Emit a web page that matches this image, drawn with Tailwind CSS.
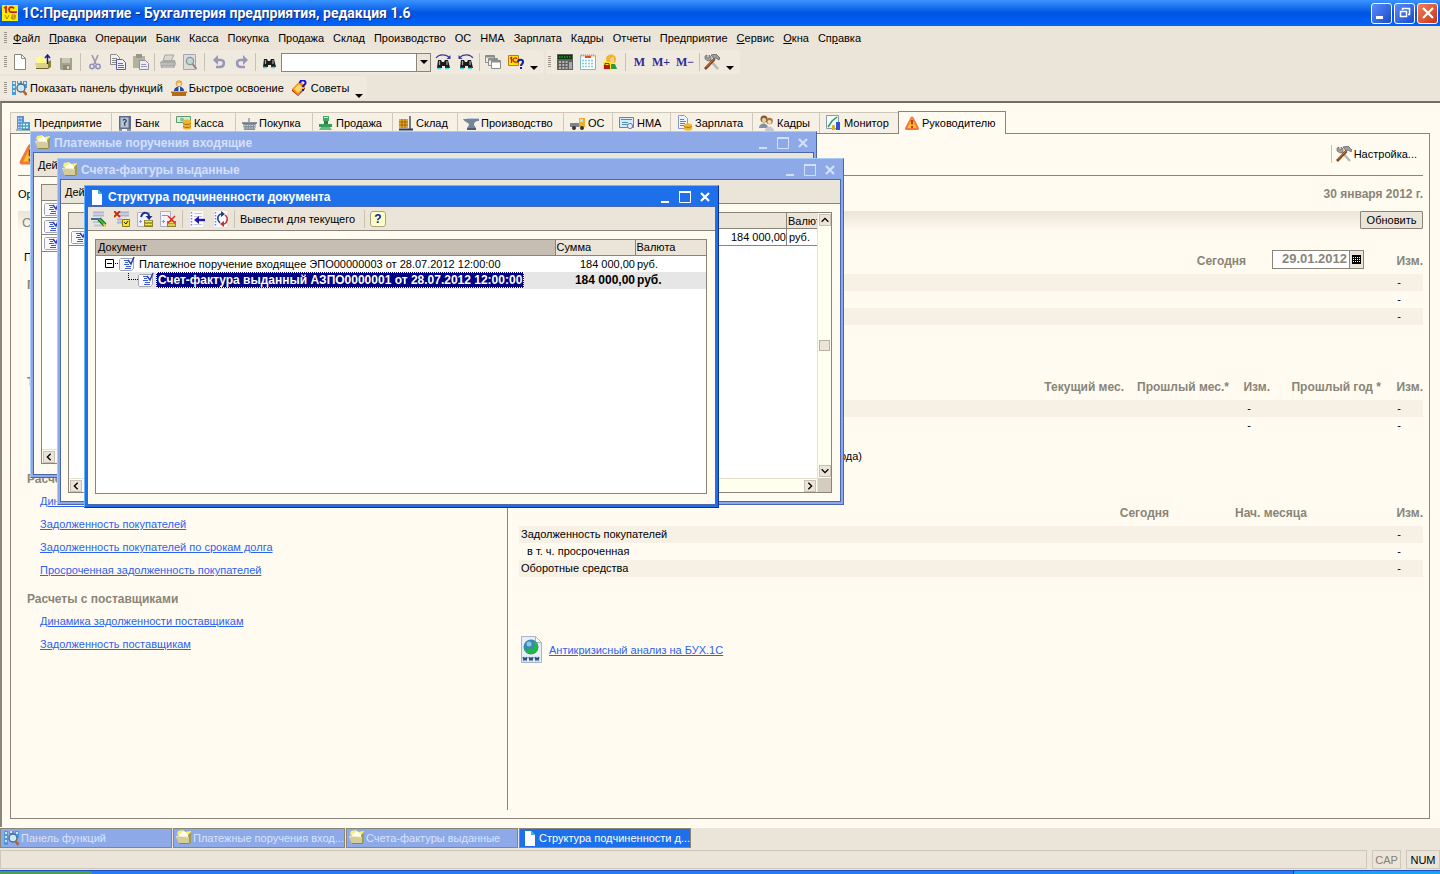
<!DOCTYPE html>
<html lang="ru">
<head>
<meta charset="utf-8">
<title>1С:Предприятие - Бухгалтерия предприятия, редакция 1.6</title>
<script src="https://cdn.jsdelivr.net/npm/@tailwindcss/browser@4"></script>
</head>
<body class="flex h-screen flex-col overflow-hidden bg-[#ebe4d8] font-['Liberation_Sans',Arial,sans-serif] text-[11px] leading-4 text-black">

<svg class="hidden" xmlns="http://www.w3.org/2000/svg">
  <symbol id="doc" viewBox="0 0 16 16"><path d="M2.500 .5h7l4 4v11h-11z" fill="#fff" stroke="#8a867a"/><path d="M9.500 .5v4h4" fill="none" stroke="#8a867a"/></symbol>
  <symbol id="page" viewBox="0 0 16 16"><path d="M3 1h6l4 4v11H3z" fill="#fff"/><path d="M9 1v4h4z" fill="#35b6d8"/></symbol>
  <symbol id="open" viewBox="0 0 16 16"><path d="M1 4l5-2 1 2 5 1-1 7H3z" fill="#fffc8c"/><path d="M0 9h12l3-2v7l-2 1H2z" fill="#dcd08c"/><path d="M13 8l3-2v7l-3 2z" fill="#8b8438"/><path d="M1 14.500h12" stroke="#6d6828"/><path d="M12.500 10V2M10 4l2.500-3L15 4" fill="none" stroke="#1c1c9a" stroke-width="1.500"/></symbol>
  <symbol id="folder" viewBox="0 0 16 16"><path d="M1 4l1-3 5-1 2 2 6-1v12h-3z" fill="#f6f078"/><path d="M3 5l5-4 5 5v3H3z" fill="#fffff4"/><path d="M12 5l3-3v11l-2 1z" fill="#a09a52"/><path d="M0 7l3-1 10 1v7H3z" fill="#d6cc98"/><path d="M0 7l2-1 10 1" fill="none" stroke="#f4eed0"/><path d="M3 13.500h10" stroke="#8c8648"/></symbol>
  <symbol id="save" viewBox="0 0 16 16"><path d="M2 4h12v12H3l-1-1z" fill="#a3a38c"/><path d="M4 4h8v5H4z" fill="#c6c6b4"/><path d="M5 11h7v5H5z" fill="#8b8b78"/><path d="M9 12h2v3H9z" fill="#d6d6c8"/></symbol>
  <symbol id="cut" viewBox="0 0 16 16"><path d="M5 1l4 9M11 1L7 10" stroke="#9a9aa8" stroke-width="1.600"/><g fill="none" stroke="#8e90bb" stroke-width="1.500"><circle cx="5" cy="12.500" r="2.200"/><circle cx="11" cy="12.500" r="2.200"/></g></symbol>
  <symbol id="copy" viewBox="0 0 16 16"><path d="M.5 .5h6l3 3v7h-9z" fill="#f4f1ea" stroke="#8b8b88"/><path d="M2 4.500h5M2 6.500h4M2 8.500h4" stroke="#8b8b88"/><path d="M6.500 5.500h6l3 3v7h-9z" fill="#f0eefa" stroke="#5a5ab0"/><path d="M8 9.500h5M8 11.500h6M8 13.500h6" stroke="#6a6ab8"/></symbol>
  <symbol id="paste" viewBox="0 0 16 16"><path d="M0 2h12v12H0z" fill="#b5b29c"/><path d="M3 0h6v4H3z" fill="#98968c"/><path d="M6.500 6.500h6l3 3v6h-9z" fill="#eeebf0" stroke="#8c8cae"/><path d="M8 10.500h5M8 12.500h6" stroke="#9a9ab8"/></symbol>
  <symbol id="print" viewBox="0 0 16 16"><path d="M5 1h9l-3 6H3z" fill="#dad7d0" stroke="#a5a5a5"/><path d="M0 8l4-2h11l1 4-2 4H1z" fill="#a9a9a8"/><path d="M1 10h13M2 13h11" stroke="#cfcfcc"/></symbol>
  <symbol id="preview" viewBox="0 0 16 16"><path d="M1.500 .5h12v15h-12z" fill="#dedcd8" stroke="#a6a6b4"/><circle cx="8" cy="7" r="3.600" fill="#bfd8d4" stroke="#849898" stroke-width="1.300"/><path d="M10.500 10l4 5" stroke="#888" stroke-width="2"/></symbol>
  <symbol id="undo" viewBox="0 0 16 16"><path d="M5 6h5c4 0 4 7-1 7H5" fill="none" stroke="#9896ba" stroke-width="2.600"/><path d="M7 1v10L2 6z" fill="#9896ba"/></symbol>
  <symbol id="redo" viewBox="0 0 16 16"><path d="M11 6H6c-4 0-4 7 1 7h4" fill="none" stroke="#9896ba" stroke-width="2.600"/><path d="M9 1v10l5-5z" fill="#9896ba"/></symbol>
  <symbol id="bino" viewBox="0 0 16 16"><path d="M3 5h3l1 2h2l1-2h3l2 8h-5v-2H7v2H2z" fill="#1b1b1b"/><path d="M4.500 6v4M12 6v4" stroke="#a4a4a4" stroke-width="1.200"/><path d="M2 13.500h4M10 13.500h4" stroke="#48d6e6" stroke-width="1.500"/></symbol>
  <symbol id="binoR" viewBox="0 0 16 16"><use href="#bino" y="1"/><path d="M1 4c3-4 9-4 13-1" fill="none" stroke="#3a3a9c" stroke-width="1.200"/><path d="M15.500 1v4h-4z" fill="#3a3a9c"/></symbol>
  <symbol id="binoL" viewBox="0 0 16 16"><use href="#bino" y="1"/><path d="M15 4c-3-4-9-4-13-1" fill="none" stroke="#3a3a9c" stroke-width="1.200"/><path d="M.5 1v4h4z" fill="#3a3a9c"/></symbol>
  <symbol id="wins" viewBox="0 0 16 16"><g fill="#eee" stroke="#8c8c8c"><path d="M.5 1.500h9v7h-9z"/><path d="M3.500 4.500h9v7h-9z"/><path d="M6.500 6.500h9v8h-9z" fill="#fff"/></g><path d="M1 2.500h8M4 5.500h8M7 7.500h8" stroke="#8c8c8c" stroke-width="2"/></symbol>
  <symbol id="calc" viewBox="0 0 16 16"><path d="M0 0h16v16H0z" fill="#606060"/><path d="M1 1h14v4H1z" fill="#083808"/><path d="M2 3h12" stroke="#20d050" stroke-dasharray="1.500 1"/><path d="M2 8h9M2 11h9M2 14h9" stroke="#b4b4b4" stroke-width="2" stroke-dasharray="2 1.300"/><path d="M12 8h3v7h-3z" fill="#a8a8a8"/></symbol>
  <symbol id="cal" viewBox="0 0 16 16"><path d="M.5 1.500h15v14H.5z" fill="#fff" stroke="#7db8c4"/><path d="M1 2.500h14" stroke="#e8e0c8" stroke-width="2"/><path d="M5 3h6" stroke="#e05028" stroke-width="2"/><path d="M1 1h14" stroke="#888" stroke-dasharray="1 1"/><path d="M2 6.500h12M2 9.500h12M2 12.500h12" stroke="#86ccdc" stroke-width="1.500" stroke-dasharray="2 1"/></symbol>
  <symbol id="userlock" viewBox="0 0 16 16"><path d="M3 5c0-6 10-6 10 0l-1 4H4z" fill="#f6b322"/><path d="M7 4l4-1v7H8z" fill="#f8cfa0"/><path d="M7 10h5l2 5H7z" fill="#2c9a3c"/><path d="M0 8h8v8H0z" fill="#ffee00"/><path d="M1 11h6v4H1z" fill="#b01818"/><path d="M2 11V9.500h4V11" fill="none" stroke="#b01818"/></symbol>
  <symbol id="tools" viewBox="0 0 16 16"><path d="M4 4l10 11" stroke="#b8b8b4" stroke-width="2.600"/><path d="M1 2l2-1v3h2V1l2 2v3L4 7 1 5z" fill="#a6a6a2" stroke="#555" stroke-width=".6"/><path d="M7 1l5-1 4 4-1 2-3-2-2 1z" fill="#9c9c98" stroke="#444" stroke-width=".6"/><path d="M10.500 5L1 15" stroke="#7c4218" stroke-width="2.600"/><path d="M10 5L2 13.500" stroke="#c87a38" stroke-width="1"/></symbol>
  <symbol id="panel" viewBox="0 0 16 16"><path d="M0 1h4v14H0zM5 1h5v3H5zM11 1h4v7h-4z" fill="#4d9ad8"/><path d="M1 3h2M1 7h2M1 11h2M6 2h2M12 3h2" stroke="#cfe8fb" stroke-width="2"/><circle cx="9" cy="8" r="4" fill="#cfe6f4" stroke="#4c6c88" stroke-width="1.400"/><path d="M11.500 11l3 4" stroke="#b4662c" stroke-width="2.600"/></symbol>
  <symbol id="learn" viewBox="0 0 16 16"><circle cx="8" cy="3.500" r="3.300" fill="#e8a850"/><circle cx="8" cy="4.500" r="2" fill="#fbdcb4"/><path d="M3 11c0-6 10-6 10 0z" fill="#1f4ca0"/><path d="M7.500 7h1.500v4H7.500z" fill="#fff"/><path d="M0 11h16v2h-1v3H1v-3H0z" fill="#b86a14"/><path d="M0 11.500h16" stroke="#eeae48"/></symbol>
  <symbol id="tips" viewBox="0 0 16 16"><path d="M0 9l8-8 5 5-7 9z" fill="#f08a10"/><path d="M2 9l5-5 4 4-5 5z" fill="#ffd95a"/><path d="M0 9l6 6 7-8v2l-7 7-6-5z" fill="#a83810"/><path d="M8 3c0-4 6-3 5.500 0-.4 2-2.500 2-2.500 4" fill="none" stroke="#1212c8" stroke-width="2"/><path d="M10 9h2v2h-2z" fill="#1212c8"/></symbol>
  <symbol id="build" viewBox="0 0 16 16"><path d="M1 1h7v13H1z" fill="#5d8fd0"/><path d="M2 3.500h5M2 6.500h5M2 9.500h5M2 12.500h5" stroke="#c9def6" stroke-width="1.300" stroke-dasharray="1.500 1"/><path d="M6 7h8v8H6z" fill="#4aa2c8"/><path d="M7 9.500h6M7 12.500h6" stroke="#e3f4fa" stroke-width="1.500" stroke-dasharray="2 1"/><path d="M0 15h14" stroke="#477" /></symbol>
  <symbol id="safe" viewBox="0 0 16 16"><path d="M2 1h12v13H2z" fill="#5c6c8c"/><path d="M3.500 2.500h8v10h-8z" fill="#b8c4d4"/><path d="M6 5.500c1-2 4-1 3 1L7.500 8v1M7 10h1.500" fill="none" stroke="#34425e" stroke-width="1.300"/><path d="M2 15h3M10 15h4" stroke="#334"/></symbol>
  <symbol id="cash" viewBox="0 0 16 16"><path d="M.5 1.500h14v6H.5z" fill="#d5ecd5" stroke="#5a9a70"/><circle cx="6" cy="4.500" r="2" fill="#8cbf98"/><path d="M7 6c0-2 8-2 8 0v7c0 2-8 2-8 0z" fill="#eeb42c"/><path d="M7 8c1 2 7 2 8 0M7 11c1 2 7 2 8 0" fill="none" stroke="#a86c10"/></symbol>
  <symbol id="basket" viewBox="0 0 16 16"><path d="M2 8h13l-1 7H3z" fill="#8490a0"/><path d="M3 10.500h11M3 13h11" stroke="#ccd4de" stroke-dasharray="1.500 1"/><path d="M1 8h15" stroke="#667488" stroke-width="1.500"/><path d="M8 8V3" stroke="#999" stroke-width="1.500"/></symbol>
  <symbol id="scale" viewBox="0 0 16 16"><path d="M5 1h6v5H5z" fill="#48a868"/><path d="M6 6h4v3H6z" fill="#2e7a48"/><path d="M1 9h13v3H1z" fill="#3a9a58"/><path d="M3 12h9l2 3H1z" fill="#68bc80"/><path d="M6 2.500h4" stroke="#d4f0dc"/></symbol>
  <symbol id="store" viewBox="0 0 16 16"><path d="M1 4h9v9H1z" fill="#e8a820"/><path d="M1 7h9M1 10h9M4 4v9M7 4v9" stroke="#8a5a10" stroke-width=".8"/><path d="M12 1v13" stroke="#456" stroke-width="1.500"/><path d="M1 14.500h14" stroke="#2a3c58" stroke-width="2"/></symbol>
  <symbol id="anvil" viewBox="0 0 16 16"><path d="M0 4h4V3h12v3c-4 0-5 2-5 4l2 3H4l2-3C6 7 2 8 0 4z" fill="#74879a"/><path d="M4 3.500h12" stroke="#c0ccd8"/><path d="M4 14h9" stroke="#4e5e70" stroke-width="2"/></symbol>
  <symbol id="truck" viewBox="0 0 16 16"><path d="M0 8h9v4H0z" fill="#7c8490"/><path d="M9 3h6v9H9z" fill="#eeb024"/><path d="M10 4h3v3h-3z" fill="#c4e4f4"/><circle cx="4" cy="13" r="2" fill="#333"/><circle cx="12" cy="13" r="2" fill="#333"/></symbol>
  <symbol id="cert" viewBox="0 0 16 16"><path d="M.5 2.500h14v10H.5z" fill="#d8ecf6" stroke="#4a90b8"/><path d="M2 4.500h11M3 7.500h6M3 9.500h6" stroke="#4a90b8"/><circle cx="11" cy="11" r="2.600" fill="#e8eef8" stroke="#6a80a8"/></symbol>
  <symbol id="salary" viewBox="0 0 16 16"><path d="M1.500 .5h6l3 3v10h-9z" fill="#eef2fa" stroke="#8a9ac0"/><path d="M3 4.500h4M3 6.500h6M3 8.500h5M3 10.500h5" stroke="#6a80b0"/><path d="M7 10c0-2 8-2 8 0v4c0 2-8 2-8 0z" fill="#f0b82c"/><path d="M7 11c1 2 7 2 8 0" fill="none" stroke="#a87010"/></symbol>
  <symbol id="people" viewBox="0 0 16 16"><circle cx="5" cy="4" r="3.500" fill="#7a5a38"/><circle cx="5" cy="5" r="2.200" fill="#f2c898"/><path d="M0 13c0-6 9-6 9 0z" fill="#8090a8"/><circle cx="10.500" cy="6" r="3.300" fill="#a87838"/><circle cx="10.500" cy="7" r="2" fill="#fbdcb4"/><path d="M6 16c0-6 9-6 9 0z" fill="#c4cad4"/></symbol>
  <symbol id="chart" viewBox="0 0 16 16"><path d="M.5 .5h12v13H.5z" fill="#f8fcff" stroke="#8899a8"/><path d="M2 12L6 6l5-4" fill="none" stroke="#2a9a50" stroke-width="1.500"/><path d="M6 10h3v5H6z" fill="#e8b020"/><path d="M10 7h4v8h-4z" fill="#2a58d0"/></symbol>
  <symbol id="warn" viewBox="0 0 16 16"><path d="M8 3L13.500 13.500H2.500z" fill="#ffd030" stroke="#f47838" stroke-width="3" stroke-linejoin="round"/><path d="M8 3.500L12.500 13h-9z" fill="#ffc428"/><path d="M8 5v4.500M8 11v2" stroke="#b83010" stroke-width="1.800"/></symbol>
  <symbol id="rec" viewBox="0 0 16 16"><path d="M.5 3.500l1-1h13v10l-2 2h-11l-1-1z" fill="#f8f8fa" stroke="#a2a4b0"/><path d="M5 4.500h4M6 6.500h3M5 8.500h5M7 10.500h5M6 12.500h6" stroke="#3c5cc8"/><path d="M9 4l3 4 3-7" fill="none" stroke="#2c3cc0" stroke-width="1.500"/></symbol>
  <symbol id="edit" viewBox="0 0 16 16"><path d="M2 1.500h11M2 4.500h11" stroke="#b0b4dc" stroke-width="2"/><path d="M0 8h9" stroke="#4070a0" stroke-width="2"/><path d="M2 11h6M3 14.500h10" stroke="#c0c2e0" stroke-width="2"/><path d="M8 8l6 6" stroke="#146414" stroke-width="4"/><path d="M8 8l6 6" stroke="#38c838" stroke-width="2"/><path d="M12.500 13l2.500 2.500" stroke="#f0d020" stroke-width="2"/></symbol>
  <symbol id="mark" viewBox="0 0 16 16"><path d="M6 1.500h9M6 4.500h9M3 8.500h5M3 11.500h5" stroke="#a9b0d8" stroke-width="2"/><path d="M0 0l6 6M6 0L0 6" stroke="#c83010" stroke-width="2"/><path d="M8.500 8.500h7v7h-7z" fill="#f4e238" stroke="#8c7c10"/><path d="M10 11l2 2 2-3" fill="none" stroke="#222"/></symbol>
  <symbol id="post" viewBox="0 0 16 16"><path d="M.5 1.500h12v14H.5z" fill="#f2f2fa" stroke="#b0b0c4"/><path d="M2 10.500h3M3.500 9v3" stroke="#8890d0"/><path d="M4 6c2-6 8-5 8 0" fill="none" stroke="#18309c" stroke-width="2"/><path d="M8.500 5h7L12 9z" fill="#18309c"/><path d="M7 9h9v7H7z" fill="#8c8430"/><path d="M8 10.500h7M8 13.500h7" stroke="#f4e458" stroke-width="1.500"/></symbol>
  <symbol id="unpost" viewBox="0 0 16 16"><path d="M.5 .5h10v15H.5z" fill="#f2f2fa" stroke="#b0b0c4"/><path d="M2 4.500h6M2 10.500h3M3.500 9v3" stroke="#8890d0"/><path d="M7 10h9v6H7z" fill="#8c8430"/><path d="M8 11.500h7M8 14h7" stroke="#f4e458" stroke-width="1.300"/><path d="M8 5l7 7M15 5l-7 7" stroke="#e02020" stroke-width="1.400"/></symbol>
  <symbol id="goto" viewBox="0 0 16 16"><path d="M1 0h13v16H1z" fill="#fafaff"/><path d="M2.500 1v14" stroke="#6a84d0" stroke-width="1.500" stroke-dasharray="1.500 1.500"/><path d="M5 2.500h8M5 5.500h8M5 13.500h8" stroke="#c6c6d4"/><path d="M9 9h7" stroke="#2018b0" stroke-width="2.400"/><path d="M10 5v8L5 9z" fill="#2018b0"/></symbol>
  <symbol id="refresh" viewBox="0 0 16 16"><path d="M1 0h13v16H1z" fill="#fafaff"/><path d="M2.500 1v14" stroke="#6a84d0" stroke-width="1.500" stroke-dasharray="1.500 1.500"/><path d="M7 12C3 8 5 3 9 3" fill="none" stroke="#20408c" stroke-width="1.500"/><path d="M8 0l4 3-4 3z" fill="#20408c"/><path d="M12 4c4 3 2 9-2 9" fill="none" stroke="#c83028" stroke-width="1.500"/><path d="M11 10v6l-4-3z" fill="#c83028"/></symbol>
  <symbol id="min" viewBox="0 0 12 12"><path d="M2 11h8" stroke="currentColor" stroke-width="2"/></symbol>
  <symbol id="max" viewBox="0 0 12 12"><path d="M.5 1.500h11v10H.5z" fill="none" stroke="currentColor"/><path d="M0 1h12" stroke="currentColor" stroke-width="2"/></symbol>
  <symbol id="close" viewBox="0 0 12 12"><path d="M2 2l8 8M10 2l-8 8" stroke="currentColor" stroke-width="2.200"/></symbol>
  <symbol id="chev" viewBox="0 0 12 12"><path d="M2 8l4-4 4 4" fill="none" stroke="#000" stroke-width="1.600"/></symbol>
  <symbol id="drop" viewBox="0 0 8 4"><path d="M0 0h8L4 4z"/></symbol>
</svg>

<header class="flex h-[26px] shrink-0 items-center gap-1 bg-linear-to-b from-[#3a93ff] via-[#0054e3] to-[#0065fa] pr-0.5 pl-0.5">
  <svg class="size-4" viewBox="0 0 16 16"><path d="M0 0h16v16H0z" fill="#ffee00"/><path d="M2 3l2-1v6M12 3.500c-1-2-5-2-5 1s2 3 8 2.500" fill="none" stroke="#d01818" stroke-width="1.700"/><path d="M3 10l2 4 2-4M10 10h3v2h-3v2h3v-4M10 10v4" fill="none" stroke="#b08000"/></svg>
  <h1 class="flex-1 font-[Roboto,sans-serif] text-[14px] font-bold text-white [text-shadow:1px_1px_#0a2a80]">1С:Предприятие - Бухгалтерия предприятия, редакция 1.6</h1>
  <div class="flex gap-0.5">
    <button aria-label="Свернуть" class="flex size-[21px] items-center justify-center rounded-[3px] border border-white bg-linear-to-br from-[#5c8cf4] to-[#1a48d0] text-white"><svg class="size-4" viewBox="0 0 16 16"><path d="M2 12.500h7" stroke="#fff" stroke-width="3"/></svg></button>
    <button aria-label="Восстановить" class="flex size-[21px] items-center justify-center rounded-[3px] border border-white bg-linear-to-br from-[#5c8cf4] to-[#1a48d0] text-white"><svg class="size-4" viewBox="0 0 16 16"><path d="M5.500 5V3.500h7v6H11M3.500 6.500h6v5h-6z" fill="none" stroke="#fff" stroke-width="1.500"/></svg></button>
    <button aria-label="Закрыть" class="flex size-[21px] items-center justify-center rounded-[3px] border border-white bg-linear-to-br from-[#f08058] to-[#c83010] text-white"><svg class="size-4" viewBox="0 0 16 16"><path d="M3 3l10 10M13 3L3 13" stroke="#fff" stroke-width="2.200"/></svg></button>
  </div>
</header>

<nav class="flex h-6 shrink-0 items-center gap-[9px] pl-1 whitespace-nowrap">
  <span class="h-3 w-[3px] bg-[repeating-linear-gradient(#9a9488_0_1px,transparent_1px_2px)]"></span>
  <a href="#" class="-ml-[3px]"><u>Ф</u>айл</a><a href="#"><u>П</u>равка</a><a href="#">Операции</a><a href="#">Банк</a><a href="#">Касса</a><a href="#">Покупка</a><a href="#">Продажа</a><a href="#">Склад</a><a href="#">Производство</a><a href="#">ОС</a><a href="#">НМА</a><a href="#">Зарплата</a><a href="#">Кадры</a><a href="#">Отчеты</a><a href="#">Предприятие</a><a href="#"><u>С</u>ервис</a><a href="#"><u>О</u>кна</a><a href="#">Сп<u>р</u>авка</a>
</nav>

<div class="flex h-6 shrink-0">
  <div class="flex items-center rounded-r bg-[#efe9de] pl-1">
    <span class="mr-[5px] h-3 w-[3px] bg-[repeating-linear-gradient(#9a9488_0_1px,transparent_1px_2px)]"></span>
    <div class="flex gap-[7px]">
      <button aria-label="Создать"><svg class="size-4"><use href="#doc"/></svg></button>
      <button aria-label="Открыть"><svg class="size-4"><use href="#open"/></svg></button>
      <button aria-label="Сохранить"><svg class="size-4"><use href="#save"/></svg></button>
    </div>
    <span class="mx-[6px] h-[18px] w-px bg-[#c8c2b4]"></span>
    <div class="flex gap-[7px]">
      <button aria-label="Вырезать"><svg class="size-4"><use href="#cut"/></svg></button>
      <button aria-label="Копировать"><svg class="size-4"><use href="#copy"/></svg></button>
      <button aria-label="Вставить"><svg class="size-4"><use href="#paste"/></svg></button>
    </div>
    <span class="mx-[5px] h-[18px] w-px bg-[#c8c2b4]"></span>
    <div class="flex gap-[6px]">
      <button aria-label="Печать"><svg class="size-4"><use href="#print"/></svg></button>
      <button aria-label="Просмотр"><svg class="size-4"><use href="#preview"/></svg></button>
    </div>
    <span class="mx-[6px] h-[18px] w-px bg-[#c8c2b4]"></span>
    <div class="flex gap-[7px]">
      <button aria-label="Отменить"><svg class="size-4"><use href="#undo"/></svg></button>
      <button aria-label="Вернуть"><svg class="size-4"><use href="#redo"/></svg></button>
    </div>
    <span class="mx-[5px] h-[18px] w-px bg-[#c8c2b4]"></span>
    <button aria-label="Найти"><svg class="size-4"><use href="#bino"/></svg></button>
    <div class="ml-1 flex h-[19px] border border-[#8a8578] bg-white">
      <input aria-label="Строка поиска" class="w-[134px] bg-white px-1 outline-none">
      <button aria-label="Список" class="flex w-[14px] items-center justify-center border-l border-[#8a8578] bg-[#ebe4d8]"><svg class="h-1 w-2"><use href="#drop"/></svg></button>
    </div>
    <div class="ml-1 flex gap-[7px]">
      <button aria-label="Найти следующий"><svg class="size-4"><use href="#binoR"/></svg></button>
      <button aria-label="Найти предыдущий"><svg class="size-4"><use href="#binoL"/></svg></button>
    </div>
    <span class="mx-[5px] h-[18px] w-px bg-[#c8c2b4]"></span>
    <div class="flex gap-[7px]">
      <button aria-label="Окна"><svg class="size-4"><use href="#wins"/></svg></button>
      <button aria-label="Справка 1С"><svg class="size-4" viewBox="0 0 16 16"><path d="M.5 1.500h10v10H.5z" fill="#ffe800" stroke="#c07818"/><path d="M2 4.500l1.500-1V9M9 5c-1-2-4-1-4 1s2 2.500 5 2" fill="none" stroke="#c81c10" stroke-width="1.300"/><path d="M10 8c0-3 5-3 5 0 0 2-2 2-2 4" fill="none" stroke="#10209c" stroke-width="2"/><path d="M12 13h2v2h-2z" fill="#10209c"/></svg></button>
    </div>
    <button aria-label="Ещё" class="mr-1 ml-1 flex h-6 w-3 items-end justify-center pb-1"><svg class="h-1 w-2"><use href="#drop"/></svg></button>
  </div>
  <div class="ml-0.5 flex items-center rounded-r bg-[#efe9de] pl-0.5">
    <span class="mr-[6px] h-3 w-[3px] bg-[repeating-linear-gradient(#9a9488_0_1px,transparent_1px_2px)]"></span>
    <div class="flex gap-[7px]">
      <button aria-label="Калькулятор"><svg class="size-4"><use href="#calc"/></svg></button>
      <button aria-label="Календарь"><svg class="size-4"><use href="#cal"/></svg></button>
      <button aria-label="Пользователи"><svg class="size-4"><use href="#userlock"/></svg></button>
    </div>
    <span class="mx-[6px] h-[18px] w-px bg-[#c8c2b4]"></span>
    <div class="flex gap-1 font-['Liberation_Serif',serif] text-[12px] font-bold text-[#2c2c98]">
      <button class="w-[15px]">M</button><button class="w-5">M+</button><button class="w-5">M−</button>
    </div>
    <span class="mr-1 ml-1 h-[18px] w-px bg-[#c8c2b4]"></span>
    <button aria-label="Сервис"><svg class="size-4"><use href="#tools"/></svg></button>
    <button aria-label="Ещё" class="mr-1 ml-1 flex h-6 w-3 items-end justify-center pb-1"><svg class="h-1 w-2"><use href="#drop"/></svg></button>
  </div>
</div>

<div class="flex h-[27px] shrink-0">
  <div class="my-0.5 flex items-center gap-2 rounded-r bg-[#efe9de] pl-1">
    <span class="-mr-[3px] h-3 w-[3px] bg-[repeating-linear-gradient(#9a9488_0_1px,transparent_1px_2px)]"></span>
    <button class="flex items-center gap-0.5"><svg class="size-4"><use href="#panel"/></svg>Показать панель функций</button>
    <button class="flex items-center gap-0.5"><svg class="size-4"><use href="#learn"/></svg>Быстрое освоение</button>
    <button class="flex items-center gap-[3px]"><svg class="size-4"><use href="#tips"/></svg>Советы</button>
    <button aria-label="Ещё" class="-ml-1 mr-0.5 flex h-5 w-3 items-end justify-center"><svg class="h-1 w-2"><use href="#drop"/></svg></button>
  </div>
</div>

<main class="relative flex flex-1 flex-col border-t-2 border-l-2 border-t-[#716f64] border-l-[#8a8778] bg-[#fffbf0] pt-2 pr-2.5 pb-2 pl-2">
  <div class="flex h-[22px] items-end whitespace-nowrap" role="tablist">
    <button class="flex h-[21px] w-[102px] items-center gap-0.5 border-t border-r border-l border-[#cfc9bb] bg-[#f7f1e5] pl-[5px]"><svg class="size-4"><use href="#build"/></svg>Предприятие</button>
    <button class="flex h-[21px] w-[59px] items-center gap-0.5 border-t border-r border-[#cfc9bb] bg-[#f7f1e5] pl-[5px]"><svg class="size-4"><use href="#safe"/></svg>Банк</button>
    <button class="flex h-[21px] w-[65px] items-center gap-0.5 border-t border-r border-[#cfc9bb] bg-[#f7f1e5] pl-[5px]"><svg class="size-4"><use href="#cash"/></svg>Касса</button>
    <button class="flex h-[21px] w-[77px] items-center gap-0.5 border-t border-r border-[#cfc9bb] bg-[#f7f1e5] pl-[5px]"><svg class="size-4"><use href="#basket"/></svg>Покупка</button>
    <button class="flex h-[21px] w-[80px] items-center gap-0.5 border-t border-r border-[#cfc9bb] bg-[#f7f1e5] pl-[5px]"><svg class="size-4"><use href="#scale"/></svg>Продажа</button>
    <button class="flex h-[21px] w-[65px] items-center gap-0.5 border-t border-r border-[#cfc9bb] bg-[#f7f1e5] pl-[5px]"><svg class="size-4"><use href="#store"/></svg>Склад</button>
    <button class="flex h-[21px] w-[106px] items-center gap-0.5 border-t border-r border-[#cfc9bb] bg-[#f7f1e5] pl-[5px]"><svg class="size-4"><use href="#anvil"/></svg>Производство</button>
    <button class="flex h-[21px] w-[49px] items-center gap-0.5 border-t border-r border-[#cfc9bb] bg-[#f7f1e5] pl-[6px]"><svg class="size-4"><use href="#truck"/></svg>ОС</button>
    <button class="flex h-[21px] w-[58px] items-center gap-0.5 border-t border-r border-[#cfc9bb] bg-[#f7f1e5] pl-[6px]"><svg class="size-4"><use href="#cert"/></svg>НМА</button>
    <button class="flex h-[21px] w-[82px] items-center gap-0.5 border-t border-r border-[#cfc9bb] bg-[#f7f1e5] pl-[6px]"><svg class="size-4"><use href="#salary"/></svg>Зарплата</button>
    <button class="flex h-[21px] w-[67px] items-center gap-0.5 border-t border-r border-[#cfc9bb] bg-[#f7f1e5] pl-[6px]"><svg class="size-4"><use href="#people"/></svg>Кадры</button>
    <button class="flex h-[21px] w-[78px] items-center gap-0.5 border-t border-[#cfc9bb] bg-[#f7f1e5] pl-[6px]"><svg class="size-4"><use href="#chart"/></svg>Монитор</button>
    <button class="z-1 -mb-px flex h-[23px] w-[108px] items-center gap-0.5 border-t border-r border-l border-[#8a8578] bg-[#fffbf0] pl-[5px]"><svg class="size-4"><use href="#warn"/></svg>Руководителю</button>
  </div>

  <section class="flex flex-1 flex-col border border-[#8a8578] pr-1.5 pb-2 pl-[7px]">
    <div class="flex h-[42px] shrink-0 items-center justify-between border-b border-[#8a8578] pb-0.5">
      <svg class="size-6"><use href="#warn"/></svg>
      <button class="flex h-[18px] items-center gap-0.5 border-l border-[#c8c2b4] pr-1.5 pl-1"><svg class="size-4"><use href="#tools"/></svg>Настройка...</button>
    </div>
    <div class="flex h-[35px] shrink-0 items-center justify-between">
      <span>Организация:</span>
      <span class="text-[12px] font-bold text-[#8a8578]">30 января 2012 г.</span>
    </div>
    <div class="flex h-[21px] shrink-0 items-start justify-between bg-linear-to-b from-[#ebe4d8] to-[#fffbf0]">
      <span class="pt-1 pl-1 text-[13px] text-[#8a8578]">Список отчетов</span>
      <button class="h-[18px] w-[63px] rounded-[1px] border border-[#8a8578] bg-[#ebe4d8]">Обновить</button>
    </div>

    <div class="flex flex-1">
      <aside class="w-[490px] shrink-0 border-r border-[#8a8578] pt-3.5">
        <p class="h-[22px] pl-1.5 leading-[22px]">Показатели</p>
        <h2 class="mt-1.5 h-[22px] pl-[9px] text-[12px] leading-[22px] font-bold text-[#8a8578]">Продажи</h2>
        <ul class="pl-[22px] leading-[23px] text-[#2c62f0] underline">
          <li><a href="#">Остатки денежных средств</a></li><li><a href="#">Движение денежных средств</a></li><li><a href="#">Динамика остатков</a></li>
        </ul>
        <h2 class="mt-1.5 h-[22px] pl-[9px] text-[12px] leading-[22px] font-bold text-[#8a8578]">Товары</h2>
        <ul class="pl-[22px] leading-[23px] text-[#2c62f0] underline">
          <li><a href="#">Доходы</a></li><li><a href="#">Расходы</a></li><li><a href="#">Продажи</a></li>
        </ul>
        <h2 class="mt-1.5 h-[22px] pl-[9px] text-[12px] leading-[22px] font-bold text-[#8a8578]">Расчеты с покупателями</h2>
        <ul class="pl-[22px] leading-[23px] text-[#2c62f0] underline">
          <li><a href="#">Динамика задолженности покупателей</a></li>
          <li><a href="#">Задолженность покупателей</a></li>
          <li><a href="#">Задолженность покупателей по срокам долга</a></li>
          <li><a href="#">Просроченная задолженность покупателей</a></li>
        </ul>
        <h2 class="mt-1.5 h-[22px] pl-[9px] text-[12px] leading-[22px] font-bold text-[#8a8578]">Расчеты с поставщиками</h2>
        <ul class="pl-[22px] leading-[23px] text-[#2c62f0] underline">
          <li><a href="#">Динамика задолженности поставщикам</a></li>
          <li><a href="#">Задолженность поставщикам</a></li>
        </ul>
      </aside>

      <div class="flex flex-1 flex-col pt-4 pl-[11px]">
        <table class="w-full table-fixed leading-[14px]">
          <colgroup><col><col class="w-[120px]"><col class="w-[118px]"><col class="w-[59px]"></colgroup>
          <thead><tr class="h-[26px] text-right text-[12px] font-bold text-[#8a8578]">
            <td></td><th class="font-bold">Сегодня</th>
            <td><div class="mb-1 ml-auto flex h-[19px] w-[92px] border border-[#8a8578] bg-white"><input aria-label="Дата" value="29.01.2012" class="min-w-0 flex-1 bg-white pr-0.5 text-right text-[13px] font-bold text-[#8a8578] outline-none"><button aria-label="Календарь" class="flex w-[14px] items-center justify-center border-l border-[#8a8578] bg-[#ebe4d8]"><svg class="h-[9px] w-[9px]" viewBox="0 0 9 9"><path d="M0 0h9v9H0z"/><path d="M1 2.500h7M1 4.500h7M1 6.500h7" stroke="#fff" stroke-dasharray="1 1"/></svg></button></div></td>
            <th class="font-bold">Изм.</th></tr></thead>
          <tbody>
            <tr class="h-[17px] bg-[#f7f1e5]"><td class="pb-0.5 pl-0.5">Остаток денежных средств</td><td></td><td></td><td class="pr-[22px] pb-0.5 text-right">-</td></tr>
            <tr class="h-[17px]"><td class="pb-0.5 pl-0.5">на расчетных счетах</td><td></td><td></td><td class="pr-[22px] pb-0.5 text-right">-</td></tr>
            <tr class="h-[17px] bg-[#f7f1e5]"><td class="pb-0.5 pl-0.5">в кассе</td><td></td><td></td><td class="pr-[22px] pb-0.5 text-right">-</td></tr>
          </tbody>
        </table>
        <table class="mt-[49px] w-full table-fixed leading-[14px]">
          <colgroup><col><col class="w-[100px]"><col class="w-[105px]"><col class="w-[41px]"><col class="w-[111px]"><col class="w-[42px]"></colgroup>
          <thead><tr class="h-[26px] text-right text-[12px] whitespace-nowrap text-[#8a8578]">
            <td></td><th class="font-bold">Текущий мес.</th><th class="font-bold">Прошлый мес.*</th><th class="font-bold">Изм.</th><th class="font-bold">Прошлый год *</th><th class="font-bold">Изм.</th></tr></thead>
          <tbody>
            <tr class="h-[17px] bg-[#f7f1e5]"><td class="pb-0.5 pl-0.5">Доходы</td><td></td><td></td><td class="pr-[19px] pb-0.5 text-right">-</td><td></td><td class="pr-[22px] pb-0.5 text-right">-</td></tr>
            <tr class="h-[17px]"><td class="pb-0.5 pl-0.5">Расходы</td><td></td><td></td><td class="pr-[19px] pb-0.5 text-right">-</td><td></td><td class="pr-[22px] pb-0.5 text-right">-</td></tr>
          </tbody>
        </table>
        <p class="mt-3.5 w-[343px] text-right">* (к аналогичному периоду прошлого года)</p>
        <table class="mt-9 w-full table-fixed leading-[14px]">
          <colgroup><col><col class="w-[100px]"><col class="w-[138px]"><col class="w-[116px]"></colgroup>
          <thead><tr class="h-[26px] text-right text-[12px] text-[#8a8578]">
            <td></td><th class="font-bold">Сегодня</th><th class="font-bold">Нач. месяца</th><th class="font-bold">Изм.</th></tr></thead>
          <tbody>
            <tr class="h-[17px] bg-[#f7f1e5]"><td class="pb-0.5 pl-0.5">Задолженность покупателей</td><td></td><td></td><td class="pr-[22px] pb-0.5 text-right">-</td></tr>
            <tr class="h-[17px]"><td class="pb-0.5 pl-2">в т. ч. просроченная</td><td></td><td></td><td class="pr-[22px] pb-0.5 text-right">-</td></tr>
            <tr class="h-[17px] bg-[#f7f1e5]"><td class="pb-0.5 pl-0.5">Оборотные средства</td><td></td><td></td><td class="pr-[22px] pb-0.5 text-right">-</td></tr>
          </tbody>
        </table>
        <a href="#" class="mt-[59px] flex items-center gap-1.5 pl-0.5 text-[#2c62f0] underline">
          <svg class="h-7 w-[22px]" viewBox="0 0 22 28"><path d="M.5 .5h14l6 6v20H.5z" fill="#e8eef6" stroke="#aab4c4"/><path d="M14.500 .5v6h6z" fill="#fff" stroke="#aab4c4"/><circle cx="10" cy="11" r="7.500" fill="#3a88b8"/><path d="M3 12c1 7 12 9 14 0 0-4-2-6-3-7-2 2 1 5-1 7s-4-1-5 1-3 1-5-1z" fill="#22b83c"/><circle cx="8" cy="8" r="2.500" fill="#8cc8e0"/><path d="M2 21l1 3 1-2 1 2 1-3M8 21l1 3 1-2 1 2 1-3M14 21l1 3 1-2 1 2 1-3" fill="none" stroke="#1c4c84" stroke-width="1.300"/></svg>Антикризисный анализ на БУХ.1С</a>
      </div>
    </div>
  </section>

  <!-- Окно "Платежные поручения входящие" -->
  <section class="absolute top-7 left-7 flex h-[347px] w-[787px] flex-col border border-t-[#a8cdf6] border-r-[#4a67ae] border-b-[#4a67ae] border-l-[#a8cdf6] bg-[#8ea9e8] px-0.5 pb-0.5">
    <div class="flex h-5 shrink-0 items-center gap-[3px] pt-0.5 pr-[5px] pl-0.5 text-[#d3e0fa]"><svg class="size-4"><use href="#folder"/></svg><h2 class="flex-1 text-[12px] font-bold">Платежные поручения входящие</h2>
      <div class="flex gap-2"><button aria-label="Свернуть"><svg class="size-3"><use href="#min"/></svg></button><button aria-label="Развернуть"><svg class="size-3"><use href="#max"/></svg></button><button aria-label="Закрыть"><svg class="size-3"><use href="#close"/></svg></button></div></div>
    <div class="flex flex-1 flex-col border border-[#4a67ae] bg-[#fffbf0]">
      <div class="flex h-6 items-center border-b border-[#8a8578] bg-[#ebe4d8] pl-1"><button>Действия</button></div>
      <div class="mt-[7px] mr-2 mb-2.5 ml-[7px] flex flex-1 flex-col border border-[#8a8578] bg-white">
        <div class="h-4 border-b border-[#8a8578] bg-[#ebe4d8]"></div>
        <div class="h-[17px] border-b border-[#8a8578] pl-0.5"><svg class="size-4"><use href="#rec"/></svg></div>
        <div class="h-[17px] border-b border-[#8a8578] pl-0.5"><svg class="size-4"><use href="#rec"/></svg></div>
        <div class="h-[17px] border-b border-[#8a8578] pl-0.5"><svg class="size-4"><use href="#rec"/></svg></div>
        <div class="mt-auto flex h-[14px] border-t border-[#e6e0d0] bg-[#fffff0] pt-px pl-px"><button aria-label="Влево" class="size-3 border border-[#c8c2b4] bg-[#ebe4d8]"><svg class="size-2.5 -rotate-90"><use href="#chev"/></svg></button></div>
      </div>
    </div>
  </section>

  <!-- Окно "Счета-фактуры выданные" -->
  <section class="absolute top-[55px] left-[55px] flex h-[347px] w-[787px] flex-col border border-t-[#a8cdf6] border-r-[#4a67ae] border-b-[#4a67ae] border-l-[#a8cdf6] bg-[#8ea9e8] px-0.5 pb-0.5">
    <div class="flex h-5 shrink-0 items-center gap-[3px] pt-0.5 pr-[5px] pl-0.5 text-[#d3e0fa]"><svg class="size-4"><use href="#folder"/></svg><h2 class="flex-1 text-[12px] font-bold">Счета-фактуры выданные</h2>
      <div class="flex gap-2"><button aria-label="Свернуть"><svg class="size-3"><use href="#min"/></svg></button><button aria-label="Развернуть"><svg class="size-3"><use href="#max"/></svg></button><button aria-label="Закрыть"><svg class="size-3"><use href="#close"/></svg></button></div></div>
    <div class="flex flex-1 flex-col border border-[#4a67ae] bg-[#fffbf0]">
      <div class="flex h-6 items-center border-b border-[#8a8578] bg-[#ebe4d8] pl-1"><button>Действия</button></div>
      <div class="mt-2 mr-2 mb-2 ml-[7px] flex flex-1 border border-[#8a8578] bg-white">
        <div class="flex flex-1 flex-col">
          <div class="flex h-4 border-b border-[#8a8578] bg-[#ebe4d8]"><span class="flex-1"></span><span class="w-[31px] overflow-hidden border-l border-[#8a8578] pl-px">Валюта</span></div>
          <div class="flex h-[17px] border-b border-[#8a8578]"><svg class="ml-0.5 size-4"><use href="#rec"/></svg><span class="flex-1 text-right">184 000,00</span><span class="w-[31px] border-l border-[#8a8578] pl-0.5">руб.</span></div>
          <div class="mt-auto flex h-[14px] justify-between border-t border-[#e6e0d0] bg-[#fffff0] px-px pt-px"><button aria-label="Влево" class="size-3 border border-[#c8c2b4] bg-[#ebe4d8]"><svg class="size-2.5 -rotate-90"><use href="#chev"/></svg></button><button aria-label="Вправо" class="size-3 border border-[#c8c2b4] bg-[#ebe4d8]"><svg class="size-2.5 rotate-90"><use href="#chev"/></svg></button></div>
        </div>
        <div class="flex w-[14px] flex-col border-l border-[#e6e0d0] bg-[#fffff0]">
          <div class="flex flex-1 flex-col items-center justify-between py-px"><button aria-label="Вверх" class="size-3 border border-[#c8c2b4] bg-[#ebe4d8]"><svg class="size-2.5"><use href="#chev"/></svg></button><span class="size-[11px] border border-[#b8b2a4] bg-[#ebe4d8]"></span><button aria-label="Вниз" class="size-3 border border-[#c8c2b4] bg-[#ebe4d8]"><svg class="size-2.5 rotate-180"><use href="#chev"/></svg></button></div>
          <div class="h-[14px] bg-[#d3ccbf]"></div>
        </div>
      </div>
    </div>
  </section>

  <!-- Окно "Структура подчиненности документа" -->
  <section class="absolute top-[82px] left-[82px] flex h-[323px] w-[635px] flex-col border border-t-[#6ab4fa] border-r-[#0a30a0] border-b-[#0a30a0] border-l-[#6ab4fa] bg-[#1e70ea] px-0.5 pb-0.5">
    <div class="flex h-5 shrink-0 items-center gap-[3px] pt-0.5 pr-[5px] pl-0.5 text-white"><svg class="size-4"><use href="#page"/></svg><h2 class="flex-1 text-[12px] font-bold">Структура подчиненности документа</h2>
      <div class="flex gap-2"><button aria-label="Свернуть"><svg class="size-3"><use href="#min"/></svg></button><button aria-label="Развернуть"><svg class="size-3"><use href="#max"/></svg></button><button aria-label="Закрыть"><svg class="size-3"><use href="#close"/></svg></button></div></div>
    <div class="flex flex-1 flex-col border border-[#4a67ae] bg-[#fffbf0]">
      <div class="flex h-6 items-center border-b border-[#8a8578] bg-[#ebe4d8] pl-[3px]">
        <div class="flex gap-[7px]">
          <button aria-label="Изменить"><svg class="size-4"><use href="#edit"/></svg></button>
          <button aria-label="Пометить на удаление"><svg class="size-4"><use href="#mark"/></svg></button>
          <button aria-label="Провести"><svg class="size-4"><use href="#post"/></svg></button>
          <button aria-label="Отмена проведения"><svg class="size-4"><use href="#unpost"/></svg></button>
        </div>
        <span class="mx-[6px] h-[18px] w-px bg-[#c8c2b4]"></span>
        <div class="flex gap-2">
          <button aria-label="Перейти"><svg class="size-4"><use href="#goto"/></svg></button>
          <button aria-label="Обновить"><svg class="size-4"><use href="#refresh"/></svg></button>
        </div>
        <span class="mx-[5px] h-[18px] w-px bg-[#c8c2b4]"></span>
        <button class="w-[119px] text-left whitespace-nowrap">Вывести для текущего</button>
        <span class="mx-[5px] h-[18px] w-px bg-[#c8c2b4]"></span>
        <button class="size-4 rounded-[3px] border border-[#a8a488] bg-[#ffffc4] text-[12px] leading-[14px] font-bold text-[#10209c]">?</button>
      </div>
      <div class="mt-2 mr-2 mb-[10px] ml-[7px] flex-1 border border-[#8a8578] bg-white">
        <table class="w-full table-fixed border-collapse leading-[14px]">
          <colgroup><col><col class="w-20"><col class="w-[71px]"></colgroup>
          <thead><tr class="h-[15px] border-b border-[#8a8578] bg-[#ebe4d8] text-left"><th class="bg-[#c6beb2] pl-0.5 font-normal">Документ</th><th class="border-l border-[#8a8578] pl-px font-normal">Сумма</th><th class="border-l border-[#8a8578] pl-px font-normal">Валюта</th></tr></thead>
          <tbody>
            <tr class="h-4"><td><div class="flex h-4 items-center pl-[9px] whitespace-nowrap"><svg class="h-[9px] w-[14px]" viewBox="0 0 14 9"><path d="M.5 .5h8v8h-8zM2 4.500h5" fill="none" stroke="#000"/><path d="M10 4.500h4" stroke="#000" stroke-dasharray="1 1"/></svg><svg class="mr-1 size-4"><use href="#rec"/></svg>Платежное поручение входящее ЭПО00000003 от 28.07.2012 12:00:00</div></td><td class="text-right">184 000,00</td><td class="pl-0.5">руб.</td></tr>
            <tr class="h-[17px] bg-[#e6e6e6] text-[12px] font-bold"><td><div class="flex h-[17px] items-center pl-8 whitespace-nowrap"><svg class="h-4 w-2.5" viewBox="0 0 10 16"><path d="M.5 1v8M1 7.500h9" fill="none" stroke="#000" stroke-dasharray="1 1"/></svg><svg class="mr-0.5 size-4"><use href="#rec"/></svg><span class="border border-dotted border-white bg-[#000080] px-px leading-[14px] text-white">Счет-фактура выданный АЗПО0000001 от 28.07.2012 12:00:00</span></div></td><td class="text-right">184 000,00</td><td class="pl-0.5">руб.</td></tr>
          </tbody>
        </table>
      </div>
    </div>
  </section>
</main>

<div class="flex h-[23px] shrink-0 items-start gap-px border-t border-white whitespace-nowrap text-[#d8e4fb]">
  <button class="flex h-5 w-[172px] items-center gap-px border border-[#8a8578] bg-[#8ea9e8] pl-[3px]"><svg class="size-4"><use href="#panel"/></svg>Панель функций</button>
  <button class="flex h-5 w-[172px] items-center gap-px border border-[#8a8578] bg-[#8ea9e8] pl-0.5"><svg class="size-4"><use href="#folder"/></svg>Платежные поручения вход...</button>
  <button class="flex h-5 w-[172px] items-center gap-px border border-[#8a8578] bg-[#8ea9e8] pl-0.5"><svg class="size-4"><use href="#folder"/></svg>Счета-фактуры выданные</button>
  <button class="flex h-5 w-[172px] items-center gap-px border border-[#8a8578] bg-[#1e70ea] pl-0.5 text-white"><svg class="size-4 shrink-0"><use href="#page"/></svg>Структура подчиненности д...</button>
</div>
<footer class="flex h-5 shrink-0 items-start gap-[5px] text-[12px]">
  <div class="h-[19px] flex-1 border border-[#cfc8ba]"></div>
  <div class="h-[19px] w-[29px] border border-[#cfc8ba] text-center text-[11px] leading-[18px] text-[#85817a]">CAP</div>
  <div class="h-[19px] w-[34px] border border-[#cfc8ba] text-center text-[11px] leading-[18px]">NUM</div>
</footer>
<div class="flex h-1 shrink-0 border-t border-[#1c50c0] bg-[#2c78ec]"><div class="w-[92px] rounded-tr bg-[#4ca04c]"></div><div class="flex-1"></div><div class="w-[147px] border-l border-[#0a3c90] bg-[#18a4ee]"></div></div>
</body>
</html>
